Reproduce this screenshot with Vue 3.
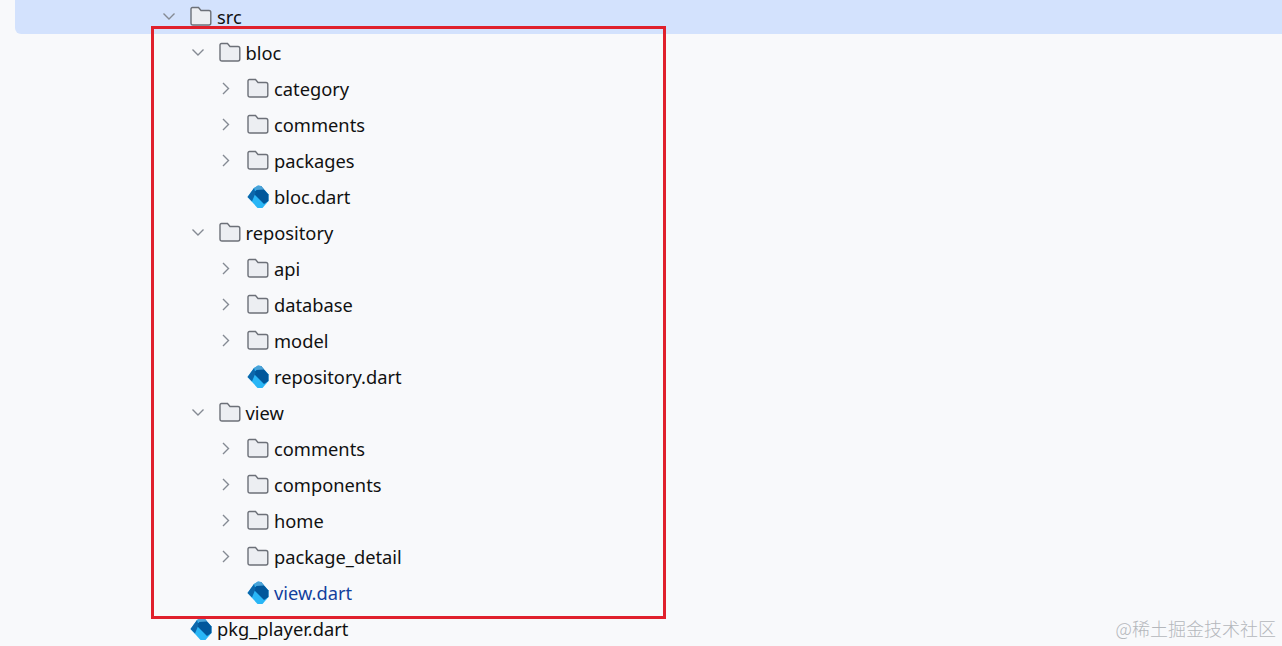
<script setup>
const tree = [
  { name: 'src', depth: 0, type: 'open', active: true },
  { name: 'bloc', depth: 1, type: 'open' },
  { name: 'category', depth: 2, type: 'closed' },
  { name: 'comments', depth: 2, type: 'closed' },
  { name: 'packages', depth: 2, type: 'closed' },
  { name: 'bloc.dart', depth: 2, type: 'file' },
  { name: 'repository', depth: 1, type: 'open' },
  { name: 'api', depth: 2, type: 'closed' },
  { name: 'database', depth: 2, type: 'closed' },
  { name: 'model', depth: 2, type: 'closed' },
  { name: 'repository.dart', depth: 2, type: 'file' },
  { name: 'view', depth: 1, type: 'open' },
  { name: 'comments', depth: 2, type: 'closed' },
  { name: 'components', depth: 2, type: 'closed' },
  { name: 'home', depth: 2, type: 'closed' },
  { name: 'package_detail', depth: 2, type: 'closed' },
  { name: 'view.dart', depth: 2, type: 'file', current: true },
  { name: 'pkg_player.dart', depth: 0, type: 'file' },
]
</script>

<template>
  <div class="page">
    <ul class="tree">
      <li
        v-for="(item, i) in tree"
        :key="i"
        class="row"
        :class="{ active: item.active, current: item.current }"
        :style="{ paddingLeft: 146 + item.depth * 28.5 + 'px' }"
      >
        <span class="arrow">
          <svg v-if="item.type === 'open'" width="16" height="16" viewBox="0 0 16 16">
            <path d="M2.5 4.5 L8 10 L13.5 4.5" fill="none" stroke="#858a93" stroke-width="1.4" />
          </svg>
          <svg v-else-if="item.type === 'closed'" width="16" height="16" viewBox="0 0 16 16">
            <path d="M5 2 L10.5 7.5 L5 13" fill="none" stroke="#858a93" stroke-width="1.4" />
          </svg>
        </span>
        <svg v-if="item.type !== 'file'" class="icon" width="22" height="22" viewBox="0 0 22 22">
          <path
            d="M2.5 1.5 H8.5 L11 4.5 H19 Q20.8 4.5 20.8 6.5 V17 Q20.8 19 19 19 H3 Q1 19 1 17 V3 Q1 1.5 2.5 1.5 Z"
            fill="#eceef2"
            stroke="#6c7078"
            stroke-width="1.4"
          />
        </svg>
        <svg v-else class="icon" width="22" height="24" viewBox="0 0 22 24">
          <path d="M0.5 12 L7 3 L11 0.5 L14 1 L21.5 9.5 V16 L15.5 23 H10.5 Z" fill="#29b6f6" />
          <path d="M6 8 L14 1 L21.5 9.5 V16 L17 19 Z" fill="#01579b" />
          <path d="M7 3 L11 0.5 L14 1 L17 4.5 L9 5 Z" fill="#4aa3d8" />
          <path d="M0.5 12 L7 3 L8.5 8 L5 16.5 Z" fill="#0c67ab" />
        </svg>
        <span class="label">{{ item.name }}</span>
      </li>
    </ul>
    <div class="mark"></div>
    <div class="watermark">@稀土掘金技术社区</div>
  </div>
</template>

<style scoped>
.page {
  position: relative;
  height: 646px;
  overflow: hidden;
  background: #f8f9fb;
  font-family: "Noto Sans", "Open Sans", sans-serif;
}

.tree {
  list-style: none;
  margin: -1px 0 0 15px;
  padding: 0;
}

.row {
  display: flex;
  align-items: center;
  height: 36px;
  font-size: 18.3px;
  color: #111;
}

.row.active {
  box-sizing: border-box;
  height: 35px;
  padding-top: 1px;
  margin-bottom: 1px;
  background: #d3e2fd;
  border-bottom-left-radius: 6px;
}

.row.current {
  color: #123f9e;
}

.arrow {
  display: flex;
  width: 16px;
  height: 16px;
  margin-right: 13px;
}

.icon {
  flex: none;
  margin-right: 5px;
}

.label {
  margin-bottom: 2px;
}

.mark {
  position: absolute;
  top: 26px;
  left: 151px;
  width: 515px;
  height: 593px;
  box-sizing: border-box;
  border: 3px solid #e0202c;
}

.watermark {
  position: absolute;
  right: 6px;
  bottom: 5px;
  font-family: "Noto Sans CJK SC", sans-serif;
  font-size: 18px;
  font-weight: 300;
  color: #b4b7bc;
}
</style>
